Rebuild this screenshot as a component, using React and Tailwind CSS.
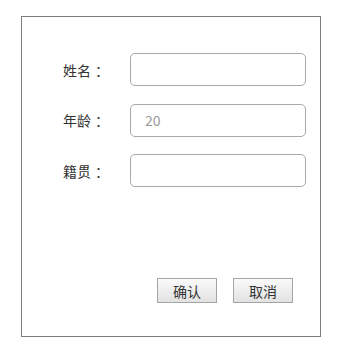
import React from 'react';

const fields = [
    { label: '姓名', placeholder: '' },
    { label: '年龄', placeholder: '20' },
    { label: '籍贯', placeholder: '' },
];

export default function App() {
    return (
        <div className="w-[342px] h-[353px] bg-white pt-[16px] pl-[21px]" style={{ fontFamily: '"Noto Sans CJK SC", "Noto Sans", sans-serif' }}>
            <div className="w-[300px] h-[321px] border border-[#7d7d7d] flex flex-col pt-[36px]">
                {/* form rows */}
                <div className="flex flex-col gap-[17.5px]">
                    {fields.map((f) => (
                        <div key={f.label} className="flex items-center h-[33px]">
                            <div className="w-[108px] pl-[41px] text-[14px] text-[#333] leading-none">
                                {f.label}<span className="ml-[4px]">：</span>
                            </div>
                            <input
                                type="text"
                                placeholder={f.placeholder}
                                className="w-[176px] h-[33px] border border-[#a9a9a9] rounded-[5px] px-[14px] text-[14px] text-[#333] placeholder:text-[#9a9a9a] outline-none"
                            />
                        </div>
                    ))}
                </div>

                {/* actions */}
                <div className="flex justify-end gap-[16px] pr-[27px] mt-[91px]">
                    <button className="w-[60px] h-[25px] border border-[#a5a5a5] bg-gradient-to-b from-[#fafafa] to-[#e2e2e2] text-[14px] text-[#333] leading-none">确认</button>
                    <button className="w-[60px] h-[25px] border border-[#a5a5a5] bg-gradient-to-b from-[#fafafa] to-[#e2e2e2] text-[14px] text-[#333] leading-none">取消</button>
                </div>
            </div>
        </div>
    );
}
